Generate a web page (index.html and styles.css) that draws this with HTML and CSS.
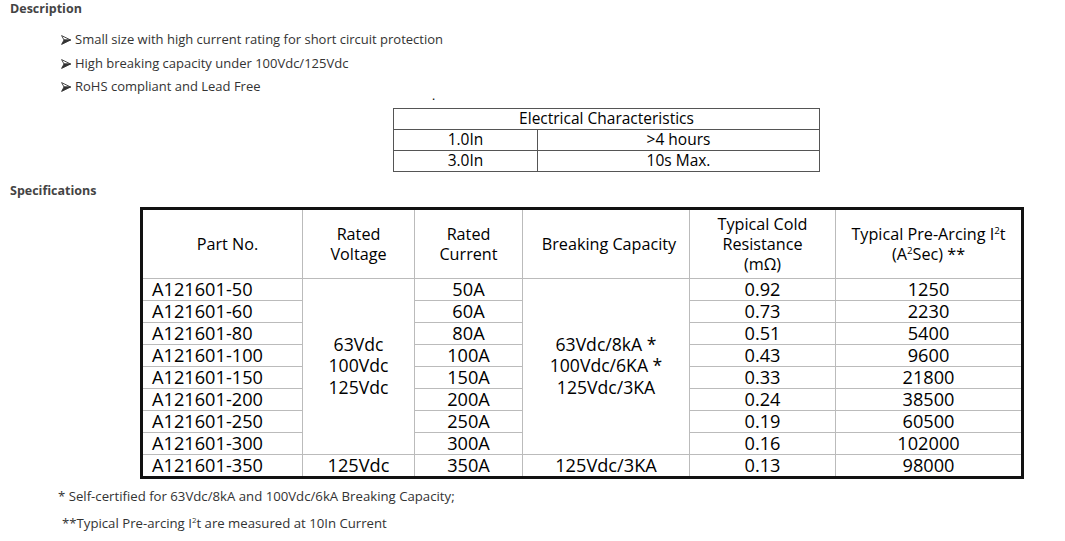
FILE: index.html
```html
<!DOCTYPE html>
<html>
<head>
<meta charset="utf-8">
<link rel="stylesheet" href="styles.css">
</head>
<body>
<div class="page">
  <h3 class="heading heading-desc">Description</h3>
  <ul class="bullets">
    <li><svg class="arrow" viewBox="0 0 10 10" width="10" height="10"><path d="M0.6 0.6 L9.6 5 L3 5 Z" fill="#fff" stroke="#333" stroke-width="0.9" stroke-linejoin="round"/><path d="M3 5 L9.6 5 L0.6 9.4 Z" fill="#333" stroke="#333" stroke-width="0.9" stroke-linejoin="round"/></svg>Small size with high current rating for short circuit protection</li>
    <li><svg class="arrow" viewBox="0 0 10 10" width="10" height="10"><path d="M0.6 0.6 L9.6 5 L3 5 Z" fill="#fff" stroke="#333" stroke-width="0.9" stroke-linejoin="round"/><path d="M3 5 L9.6 5 L0.6 9.4 Z" fill="#333" stroke="#333" stroke-width="0.9" stroke-linejoin="round"/></svg>High breaking capacity under 100Vdc/125Vdc</li>
    <li><svg class="arrow" viewBox="0 0 10 10" width="10" height="10"><path d="M0.6 0.6 L9.6 5 L3 5 Z" fill="#fff" stroke="#333" stroke-width="0.9" stroke-linejoin="round"/><path d="M3 5 L9.6 5 L0.6 9.4 Z" fill="#333" stroke="#333" stroke-width="0.9" stroke-linejoin="round"/></svg>RoHS compliant and Lead Free</li>
  </ul>
  <div class="dot">.</div>
  <table class="elec">
    <colgroup><col class="ec1"><col class="ec2"></colgroup>
    <tr><td colspan="2">Electrical Characteristics</td></tr>
    <tr><td>1.0In</td><td>&gt;4 hours</td></tr>
    <tr><td>3.0In</td><td>10s Max.</td></tr>
  </table>
  <h3 class="heading heading-spec">Specifications</h3>
  <table class="spec">
    <colgroup>
      <col class="c1"><col class="c2"><col class="c3"><col class="c4"><col class="c5"><col class="c6">
    </colgroup>
    <tr class="head">
      <th class="h-part">Part No.</th>
      <th>Rated<br>Voltage</th>
      <th>Rated<br>Current</th>
      <th class="h-break">Breaking Capacity</th>
      <th>Typical Cold<br>Resistance<br>(mΩ)</th>
      <th>Typical Pre-Arcing I<sup>2</sup>t<br>(A<sup>2</sup>Sec) **</th>
    </tr>
    <tr><td class="part">A121601-50</td><td rowspan="8" class="merged"><div class="ml">63Vdc</div><div class="ml">100Vdc</div><div class="ml">125Vdc</div></td><td>50A</td><td rowspan="8" class="merged"><div class="ml">63Vdc/8kA *</div><div class="ml">100Vdc/6KA *</div><div class="ml">125Vdc/3KA</div></td><td>0.92</td><td>1250</td></tr>
    <tr><td class="part">A121601-60</td><td>60A</td><td>0.73</td><td>2230</td></tr>
    <tr><td class="part">A121601-80</td><td>80A</td><td>0.51</td><td>5400</td></tr>
    <tr><td class="part">A121601-100</td><td>100A</td><td>0.43</td><td>9600</td></tr>
    <tr><td class="part">A121601-150</td><td>150A</td><td>0.33</td><td>21800</td></tr>
    <tr><td class="part">A121601-200</td><td>200A</td><td>0.24</td><td>38500</td></tr>
    <tr><td class="part">A121601-250</td><td>250A</td><td>0.19</td><td>60500</td></tr>
    <tr><td class="part">A121601-300</td><td>300A</td><td>0.16</td><td>102000</td></tr>
    <tr><td class="part">A121601-350</td><td>125Vdc</td><td>350A</td><td>125Vdc/3KA</td><td>0.13</td><td>98000</td></tr>
  </table>
  <p class="note note1">* Self-certified for 63Vdc/8kA and 100Vdc/6kA Breaking Capacity;</p>
  <p class="note note2">**Typical Pre-arcing I<sup>2</sup>t are measured at 10In Current</p>
</div>
</body>
</html>
```
FILE: styles.css
```css
html, body {
  margin: 0;
  padding: 0;
  background: #fff;
}
.page {
  font-family: "Open Sans", "DejaVu Sans", sans-serif;
  color: #333;
  font-size: 13px;
  display: flow-root;
}
.heading {
  margin: 0;
  font-size: 12.5px;
  font-weight: 700;
  color: #444;
  margin-left: 10px;
  line-height: 18px;
}
.bullets {
  list-style: none;
  margin: 10px 0 0 61px;
  padding: 0;
}
.bullets li {
  line-height: 23.5px;
  font-size: 13px;
  color: #333;
  white-space: nowrap;
}
.arrow {
  display: inline-block;
  vertical-align: -1px;
  margin-right: 4px;
}
.dot {
  margin-left: 432px;
  margin-top: -4px;
  height: 13px;
  line-height: 2px;
  font-size: 12px;
  color: #000;
}
.elec {
  margin-left: 393px;
  border-collapse: collapse;
  table-layout: fixed;
  width: 426px;
  font-family: "Open Sans", sans-serif;
  font-size: 15.5px;
  color: #000;
}
.ec1 { width: 144px; }
.ec2 { width: 282px; }
.elec td {
  border: 1px solid #555;
  height: 20px;
  padding: 0;
  line-height: 19px;
  text-align: center;
}
.heading-spec {
  margin-top: 10px;
}
.spec {
  margin-top: 7px;
  margin-left: 140px;
  border-collapse: collapse;
  table-layout: fixed;
  width: 881px;
  border: 3px solid #111;
  font-family: "Open Sans", sans-serif;
  color: #000;
}
.c1 { width: 161px; }
.c2 { width: 112px; }
.c3 { width: 108px; }
.c4 { width: 167px; }
.c5 { width: 146px; }
.c6 { width: 187px; }
.spec th, .spec td {
  border: 1px solid #bbb;
  padding: 0;
  text-align: center;
  vertical-align: middle;
}
.spec th {
  font-weight: 400;
  font-size: 16.2px;
  line-height: 20px;
  height: 68px;
}
.spec th.h-part {
  padding-left: 10px;
}
.spec th.h-break {
  padding-left: 6px;
}
.spec td {
  font-size: 18.2px;
  line-height: 21px;
  height: 21px;
}
.spec td.part {
  text-align: left;
  padding-left: 9px;
}
.spec td.merged {
  font-size: 17.6px;
}
.ml {
  height: 21.5px;
  line-height: 21.5px;
  overflow: visible;
}
sup {
  font-size: 0.6em;
  line-height: 0;
  vertical-align: 0.6em;
}
.note {
  margin: 0;
  font-size: 13.2px;
  color: #333;
}
.note1 {
  margin-left: 58px;
  margin-top: 8px;
  line-height: 18px;
}
.note2 {
  margin-left: 62px;
  margin-top: 9px;
  line-height: 18px;
}
```
